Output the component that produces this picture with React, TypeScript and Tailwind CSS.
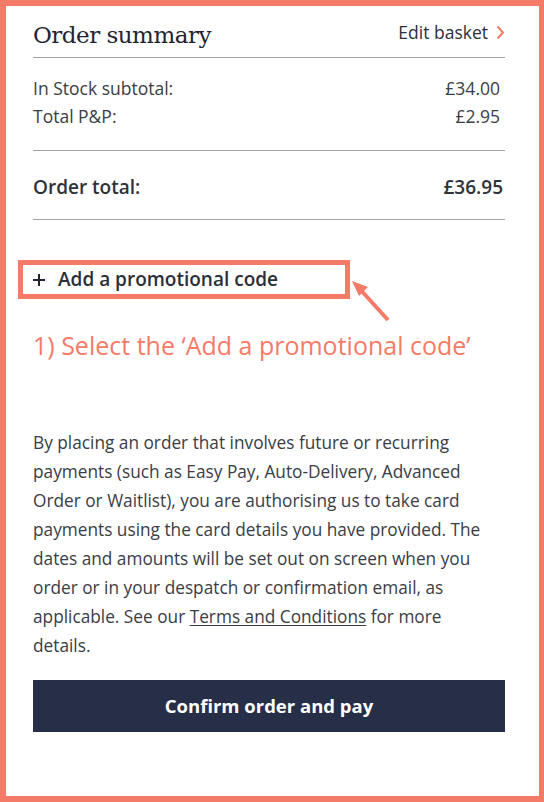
export default function App() {
  const body = { fontFamily: "'Open Sans', 'Noto Sans', sans-serif" };
  return (
    <div className="relative h-[802px] w-[544px] border-[6px] border-r-[5px] border-[#f47b67] bg-white" style={body}>
      <div className="pl-[27px] pr-[34px]">
        <div className="flex items-end justify-between pt-[12px] pb-[5px] border-b-[1.5px] border-[#a3a3a0]">
          <h1 className="text-[23px] leading-[34px] text-[#1f2433]" style={{ fontFamily: "'DejaVu Serif', 'Liberation Serif', serif", fontWeight: 400, letterSpacing: "-0.5px" }}>
            Order summary
          </h1>
          <a className="mb-[7px] flex items-center gap-[8px] text-[17.5px] text-[#2b2f3a]">
            Edit basket
            <svg width="9" height="15" viewBox="0 0 9 15" className="mt-[1px]">
              <path d="M1.5 1.5 L7 7.5 L1.5 13.5" fill="none" stroke="#f47b67" strokeWidth="2" />
            </svg>
          </a>
        </div>

        <div className="border-b-[1.5px] border-[#a3a3a0] pt-[16px] pb-[20px] pr-[5px] text-[17.5px] leading-[28px] text-[#3a3d45]">
          <div className="flex justify-between">
            <span>In Stock subtotal:</span>
            <span>£34.00</span>
          </div>
          <div className="flex justify-between">
            <span>Total P&amp;P:</span>
            <span>£2.95</span>
          </div>
        </div>

        <div className="flex justify-between border-b-[1.5px] border-[#a3a3a0] pt-[25px] pb-[21px] pr-[2px] text-[19px] font-semibold leading-[22px] text-[#2f323a]">
          <span>Order total:</span>
          <span>£36.95</span>
        </div>
      </div>

      <div className="ml-[12px] mt-[40px] flex h-[39px] w-[332px] items-center border-[5px] border-[#f47b67] pl-[10px]">
        <svg width="12" height="12" viewBox="0 0 12 12" className="mr-[13px]">
          <path d="M6 0 V12 M0 6 H12" stroke="#1f2433" strokeWidth="2" />
        </svg>
        <span className="text-[19px] font-semibold text-[#2b2f3a]">Add a promotional code</span>
      </div>
      <svg className="absolute left-[344px] top-[272px]" width="50" height="52" viewBox="0 0 50 52">
        <path d="M38 42 L8 9" stroke="#f47b67" strokeWidth="4" fill="none" />
        <path d="M2 3 L18 9 L9 18 Z" fill="#f47b67" />
      </svg>

      <p className="ml-[27px] mt-[30px] text-[25px] leading-[32px] text-[#f47b67]">
        1) Select the ‘Add a promotional code’
      </p>

      <div className="pl-[27px] pr-[34px]">
        <p className="mt-[67px] text-[17.25px] leading-[29px] text-[#3a3d45]">
          By placing an order that involves future or recurring<br />
          payments (such as Easy Pay, Auto-Delivery, Advanced<br />
          Order or Waitlist), you are authorising us to take card<br />
          payments using the card details you have provided. The<br />
          dates and amounts will be set out on screen when you<br />
          order or in your despatch or confirmation email, as<br />
          applicable. See our <span className="underline underline-offset-2">Terms and Conditions</span> for more<br />
          details.
        </p>
        <button className="mt-[20px] h-[52px] w-full bg-[#262f47] text-[18.5px] font-bold text-white">
          Confirm order and pay
        </button>
      </div>
    </div>
  );
}
